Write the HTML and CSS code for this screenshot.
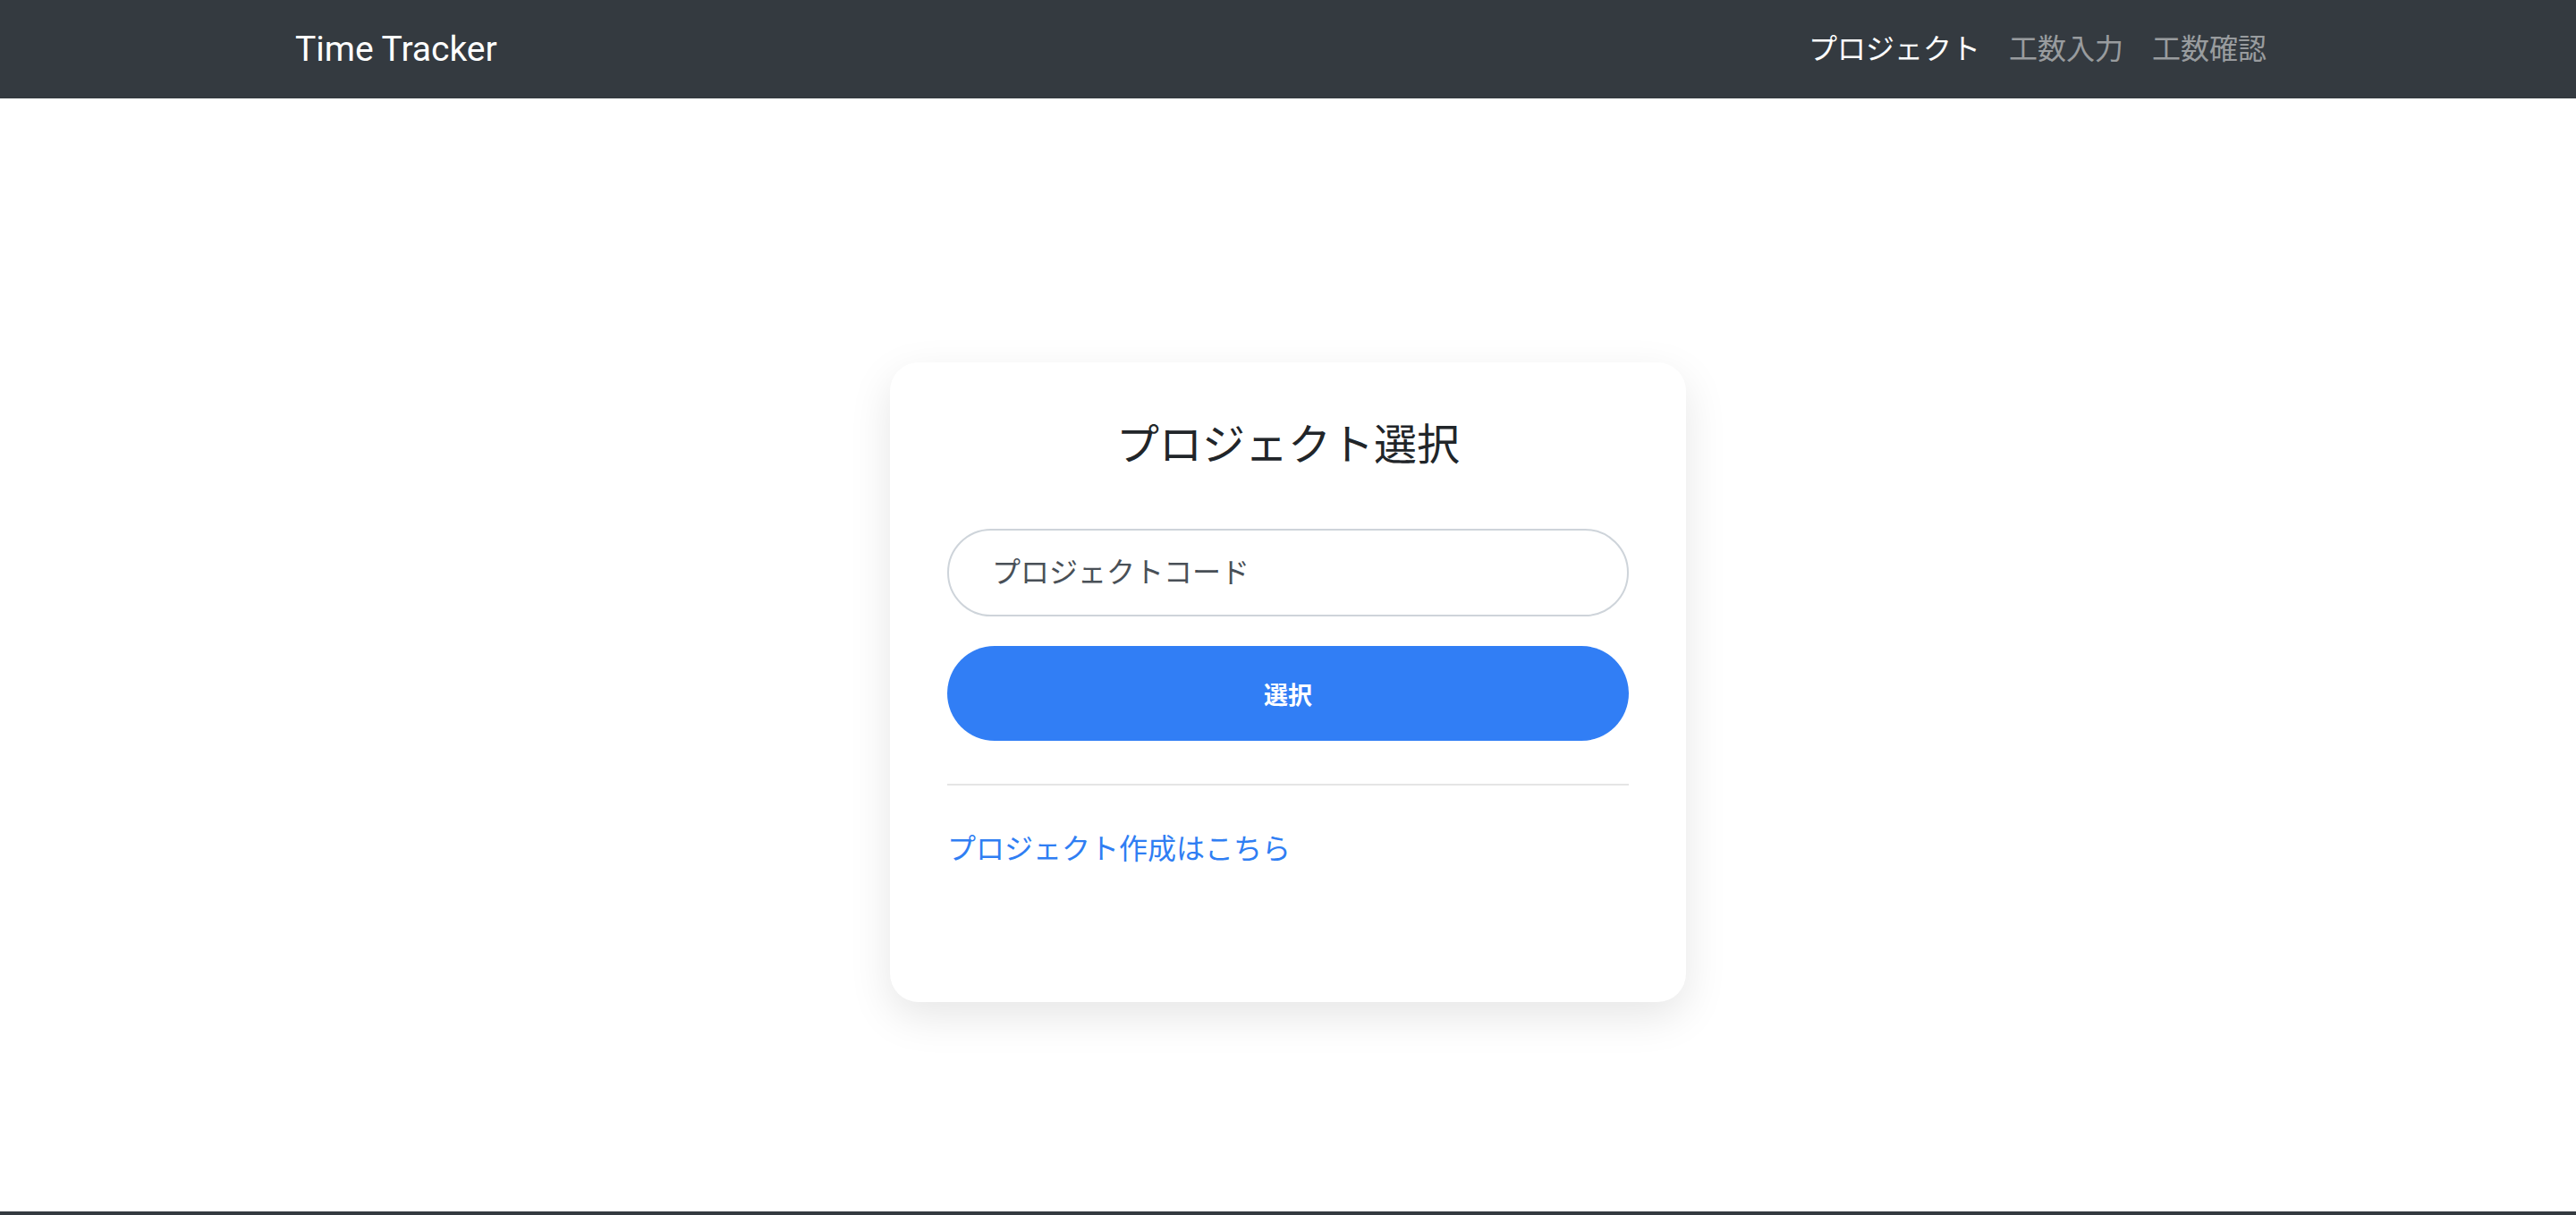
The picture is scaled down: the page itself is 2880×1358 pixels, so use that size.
FILE: index.html
```html
<!DOCTYPE html>
<html lang="ja">
<head>
    <meta charset="UTF-8">
    <meta name="viewport" content="width=device-width, initial-scale=1.0">
    <title>Time Tracker</title>
    <link rel="stylesheet" href="styles.css">
</head>
<body>
    <nav class="navbar">
        <div class="container">
            <a class="brand" href="#">Time Tracker</a>
            <ul class="nav-links">
                <li><a class="nav-link active" href="#">プロジェクト</a></li>
                <li><a class="nav-link" href="#">工数入力</a></li>
                <li><a class="nav-link" href="#">工数確認</a></li>
            </ul>
        </div>
    </nav>

    <main class="main">
        <div class="card">
            <h4 class="card-title">プロジェクト選択</h4>
            <form class="select-form" onsubmit="return false">
                <input class="form-input" type="text" placeholder="プロジェクトコード">
                <button class="btn-primary" type="submit">選択</button>
            </form>
            <hr class="divider">
            <a class="create-link" href="#">プロジェクト作成はこちら</a>
        </div>
    </main>

    <footer class="footer"></footer>
</body>
</html>
```

FILE: styles.css
```css
* {
    box-sizing: border-box;
}
body {
    margin: 0;
    font-family: Roboto, "Noto Sans CJK JP", sans-serif;
    color: #212529;
    background: #fff;
}
a {
    text-decoration: none;
}

/* ナビバー */
.navbar {
    background: #343a40;
    height: 110px;
    display: flex;
    align-items: center;
}
.container {
    width: 2280px;
    margin: 0 auto;
    padding: 0 30px;
    display: flex;
    align-items: center;
    justify-content: space-between;
}
.brand {
    color: #fff;
    font-size: 39px;
    line-height: 60px;
}
.nav-links {
    list-style: none;
    margin: 0;
    padding: 0;
    display: flex;
}
.nav-link {
    display: block;
    padding: 0 16px;
    font-size: 32px;
    line-height: 48px;
    color: rgba(255, 255, 255, 0.5);
}
.nav-link.active {
    color: #fff;
}

/* メイン */
.main {
    min-height: calc(100vh - 114px);
    display: flex;
    flex-direction: column;
    align-items: center;
    padding-top: 295px;
}
.card {
    width: 890px;
    height: 715px;
    padding: 64px;
    background: #fff;
    border-radius: 32px;
    box-shadow: 0 16px 48px rgba(0, 0, 0, 0.1);
}
.card-title {
    margin: 0 0 64px;
    text-align: center;
    font-size: 48px;
    line-height: 58px;
    font-weight: 400;
    color: #212529;
}
.select-form {
    display: flex;
    flex-direction: column;
    gap: 33px;
}
.form-input {
    width: 100%;
    height: 98px;
    padding: 0 48px;
    border: 2px solid #ced4da;
    border-radius: 49px;
    font-family: inherit;
    font-size: 32px;
    color: #495057;
    outline: none;
}
.form-input::placeholder {
    color: #495057;
}
.btn-primary {
    width: 100%;
    height: 106px;
    border: none;
    border-radius: 53px;
    background: #317ef5;
    color: #fff;
    font-family: inherit;
    font-size: 27px;
    font-weight: 700;
    cursor: pointer;
}
.divider {
    margin: 48px 0 0;
    border: none;
    border-top: 2px solid #e5e5e5;
}
.create-link {
    display: block;
    margin-top: 47px;
    font-size: 32px;
    line-height: 48px;
    color: #2f7ef3;
}

.footer {
    background: #343a40;
    height: 112px;
}
```
